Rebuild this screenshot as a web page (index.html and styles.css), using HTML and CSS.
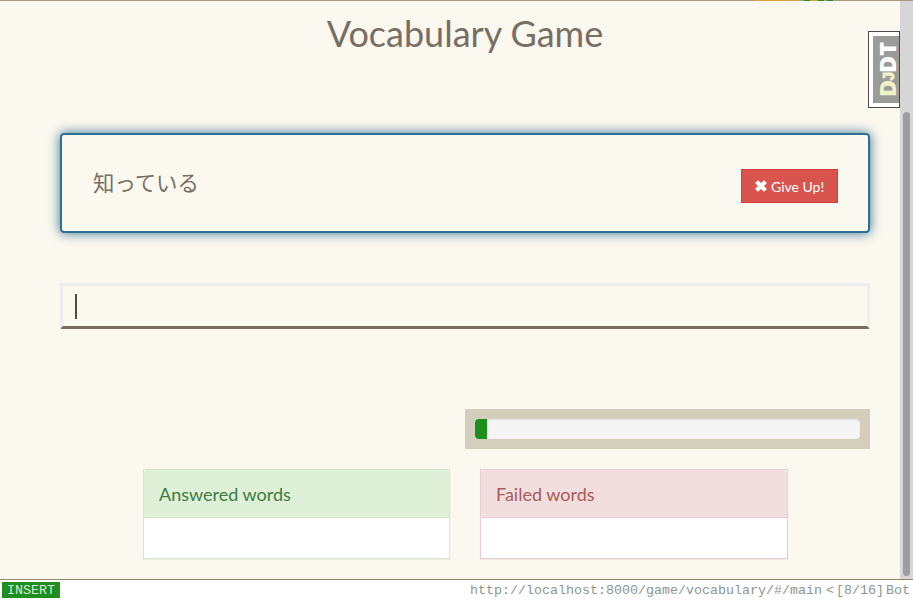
FILE: index.html
```html
<!DOCTYPE html>
<html lang="en">
<head>
<meta charset="utf-8">
<title>Vocabulary Game</title>
<link rel="stylesheet" href="styles.css">
</head>
<body>
<div class="viewport">
  <div class="top-strip"></div>
  <main class="page">
    <h1 class="title">Vocabulary Game</h1>
    <section class="word-card">
      <span class="word" lang="ja">知っている</span>
      <button class="give-up"><svg class="remove" viewBox="0 0 12 12"><path d="M3 .2 6 3 9 .2 11.9 3 9 6l2.9 3L9 11.8 6 9 3 11.8.1 9 3 6 .1 3z"/></svg><span>Give Up!</span></button>
    </section>
    <div class="answer"><span class="caret"></span></div>
    <div class="progress-box"><div class="progress"><div class="bar"></div></div></div>
    <div class="panels">
      <section class="panel answered"><h2>Answered words</h2><div class="panel-body"></div></section>
      <section class="panel failed"><h2>Failed words</h2><div class="panel-body"></div></section>
    </div>
  </main>
  <div class="scrollbar"><div class="thumb"></div></div>
  <div class="debug-handle"><div class="debug-label"><span class="dj">D<small>J</small></span>DT</div></div>
</div>
<footer class="status"><span class="mode">INSERT</span><span class="location"><span>http://localhost:8000/game/vocabulary/#/main</span><span class="back">&lt;</span><span>[8/16]</span><span class="bot">Bot</span></span></footer>
</body>
</html>
```
FILE: styles.css
```css
* { box-sizing: border-box; }
body { margin: 0; width: 913px; height: 600px; overflow: hidden; background: #fff; color: #786e64; font-family: Lato, "Noto Sans CJK JP", sans-serif; }
.viewport { position: relative; display: flex; height: 579px; background: #fbf8ef; }
.top-strip { position: absolute; z-index: 2; top: 0; left: 0; width: 913px; height: 1px; background: linear-gradient(90deg, #a89986 0 754px, #d9a13b 754px 800px, #a89986 800px 804px, #1e8e1e 804px 810px, #d9a13b 810px 818px, #1e8e1e 818px 824px, #a89986 824px 827px, #1e8e1e 827px 833px, #a89986 833px); }
.page { width: 900px; padding: 11px 30px 0 60px; }
.title { margin: 0; height: 44px; font-size: 36px; line-height: 44px; font-weight: 400; text-align: center; color: #786e64; }
.word-card { display: flex; align-items: center; justify-content: space-between; height: 100px; margin-top: 78px; padding: 4px 30px 0 31px; border: 2px solid #2f6f93; border-radius: 4px; box-shadow: 0 0 12px #2f6f93; }
.word { margin-bottom: 6px; font-family: "Noto Sans CJK JP", sans-serif; font-size: 21.4px; font-weight: 400; line-height: 30px; }
.give-up { display: flex; align-items: center; gap: 4px; width: 97px; height: 34px; margin-top: 2px; margin-bottom: 0; padding: 0 0 0 13px; border: 1px solid #d43f3a; background: #d9534f; color: #fff; font: 14px Lato, sans-serif; white-space: nowrap; }
.remove { width: 12px; height: 12px; fill: #fff; }
.give-up span { margin-top: 1px; }
.answer { height: 46px; margin-top: 50px; padding: 8px 12px; border: 3px solid #eee; border-bottom-color: #786e64; border-radius: 2px; }
.caret { display: block; width: 2px; height: 25px; background: #504b49; }
.progress-box { width: 405px; height: 40px; margin: 80px 0 0 405px; padding: 10px; background: #d3cfbc; }
.progress { height: 20px; overflow: hidden; border-radius: 4px; background: #f5f5f5; box-shadow: inset 0 1px 2px rgba(0,0,0,.1); }
.bar { width: 12px; height: 20px; background: #1e8e1e; }
.panels { display: flex; gap: 30px; margin: 20px 82px 0 83px; }
.panel { height: 90px; border: 1px solid; background: #fff; box-shadow: 0 1px 1px rgba(0,0,0,.05); }
.panel h2 { height: 48px; margin: 0; padding: 1px 15px 0; border-bottom: 1px solid; border-radius: 3px 3px 0 0; font-size: 18px; line-height: 46px; font-weight: 400; }
.answered, .answered h2 { border-color: #d6e9c6; }
.answered { width: 307px; }
.answered h2 { background: #dff0d8; color: #3c7c3d; }
.failed, .failed h2 { border-color: #ebccd1; }
.failed { width: 308px; }
.failed h2 { background: #f2dede; color: #a95b56; }
.scrollbar { width: 13px; height: 579px; padding: 112px 3px 3px; background: #d6d6d6; }
.thumb { width: 7px; height: 464px; border-radius: 4px; background: #9c9d9e; }
.debug-handle { position: absolute; z-index: 3; left: 868px; top: 31px; width: 32px; height: 77px; padding: 4px 0 4px 4px; border: 1px solid #4b4b4b; background: #fff; }
.debug-label { display: flex; align-items: center; justify-content: center; width: 26px; height: 67px; padding: 0 2px 0 0; background: #9b9b98; color: #fff; writing-mode: vertical-rl; transform: rotate(180deg); font: 800 23.5px/20px "Open Sans", sans-serif; }
.dj { color: #f0f2c9; }
.dj small { display: inline-block; margin: -1px 0 -2px; font: 700 16px/16px "Liberation Mono", monospace; -webkit-text-stroke: .9px #f0f2c9; transform: translateX(-3px); }
.status { display: flex; justify-content: space-between; height: 21px; padding: 2px 3px 3px 2px; border-top: 1px solid #988669; background: #fff; color: #8b9690; font: 13.333px/18px "Liberation Mono", monospace; }
.mode { width: 58px; height: 16px; padding-left: 5px; background: #1e8e1e; color: #d4ead9; line-height: 17px; }
.location { display: flex; }
.back { margin-left: 4px; }
.location > :nth-child(3) { margin-left: 2px; }
.bot { margin-left: 2px; }
```
